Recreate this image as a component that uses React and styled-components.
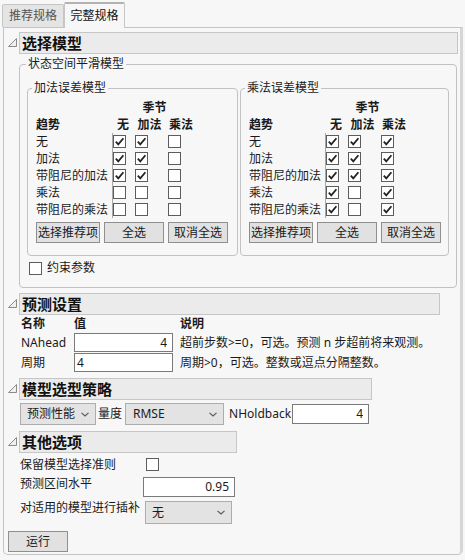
import React from 'react'
import styled, { createGlobalStyle } from 'styled-components'

const GlobalStyle = createGlobalStyle`
  body {
    margin: 0;
    background: #f7f7f7;
    font-family: "Noto Sans", "Noto Sans CJK SC", sans-serif;
    font-size: 12px;
    line-height: 14px;
    color: #1a1a1a;
  }
`

const Page = styled.div`
  width: 465px;
  height: 560px;
  overflow: hidden;
`

const TabBar = styled.div`
  display: flex;
  align-items: flex-end;
  height: 27px;
  padding-left: 2px;
`

const Tab = styled.div`
  box-sizing: border-box;
  width: ${p => (p.$active ? 61 : 62)}px;
  height: ${p => (p.$active ? 26 : 23)}px;
  margin-bottom: ${p => (p.$active ? -1 : 0)}px;
  display: flex;
  align-items: center;
  justify-content: center;
  border: 1px solid #c6c6c6;
  border-bottom: none;
  border-top: ${p => (p.$active ? '2px solid #b2b2b2' : '1px solid #c6c6c6')};
  border-radius: 2px 2px 0 0;
  background: ${p => (p.$active ? '#f7f7f7' : '#e4e4e4')};
  color: ${p => (p.$active ? '#111' : '#555')};
  position: relative;
  z-index: ${p => (p.$active ? 1 : 0)};
`

const Panel = styled.div`
  box-sizing: border-box;
  margin-left: 3px;
  width: 460px;
  border: 1px solid #c4c4c4;
  border-right: 3px solid #d6d6d6;
  border-radius: 0 0 5px 5px;
  padding: 4px 0 2px 0;
`

const Section = styled.div`
  margin-top: ${p => p.$mt || 0}px;
`

const SectionHead = styled.div`
  display: flex;
  align-items: center;
`

const Toggle = styled.div`
  width: 15px;
  box-sizing: border-box;
  padding-left: 4px;
  display: flex;
  align-items: center;
  height: 22px;
  svg { margin-top: -2px; }
`

const HeadBox = styled.div`
  box-sizing: border-box;
  width: ${p => p.$w}px;
  height: 22px;
  background: #ebebeb;
  border: 1px solid #c6c6c6;
  padding-left: 2px;
  font-size: 15px;
  font-weight: bold;
  line-height: 20px;
  color: #111;
`

const SectionBody = styled.div`
  padding-left: ${p => 15 + (p.$pl || 0)}px;
`

const Group = styled.fieldset`
  box-sizing: border-box;
  width: ${p => p.$w}px;
  margin: ${p => p.$mt || 0}px 0 0 0;
  padding: ${p => p.$pad};
  border: 1px solid #c2c2c2;
  border-radius: 4px;
  min-width: 0;
`

const Legend = styled.legend`
  padding: 0 2px;
  margin-left: ${p => p.$lx}px;
  font-size: 12px;
  line-height: 14px;
`

const GroupRow = styled.div`
  display: flex;
  gap: 2px;
`

const Table = styled.div`
  display: grid;
  grid-template-columns: 76px 22px 31px 32px;
  grid-auto-rows: 17px;
  align-items: center;
`

const HeadCell = styled.div`
  font-weight: bold;
  text-align: ${p => p.$align || 'left'};
  grid-column: ${p => p.$span || 'auto'};
`

const Label = styled.div`
  white-space: nowrap;
`

const CheckCell = styled.div`
  height: 17px;
  display: flex;
  align-items: center;
  box-sizing: border-box;
  padding-left: ${p => p.$pad}px;
  border-left: ${p => (p.$line ? '1px solid #a8a8a8' : 'none')};
`

const Box = styled.span`
  box-sizing: border-box;
  width: 13px;
  height: 13px;
  display: inline-flex;
  align-items: center;
  justify-content: center;
  border: 1px solid #5c5c5c;
  background: #fff;
  flex-shrink: 0;
`

const ButtonRow = styled.div`
  display: flex;
  gap: 4px;
  margin-top: 4px;
`

const Button = styled.div`
  box-sizing: border-box;
  width: ${p => p.$w}px;
  height: 21px;
  display: flex;
  align-items: center;
  justify-content: center;
  background: #e1e1e1;
  border: 1px solid #8f8f8f;
  font-size: 12px;
  margin-left: ${p => p.$ml || 0}px;
  margin-top: ${p => p.$mt || 0}px;
`

const OptionRow = styled.div`
  display: flex;
  align-items: center;
  gap: 5px;
  margin: 5px 0 0 2px;
`

const ForecastGrid = styled.div`
  display: grid;
  grid-template-columns: 53px 99px auto;
  grid-template-rows: 17px 19px 19px;
  row-gap: 1px;
  align-items: center;
`

const Desc = styled.div`
  padding-left: 7px;
  white-space: nowrap;
`

const Field = styled.input`
  box-sizing: border-box;
  width: ${p => p.$w}px;
  height: ${p => p.$h || 19}px;
  margin: 0;
  border: 1px solid #7a7a7a;
  background: #fff;
  font-family: "Noto Sans", "Noto Sans CJK SC", sans-serif;
  font-size: 12px;
  color: #1a1a1a;
  text-align: ${p => p.$align || 'left'};
  padding: 0 ${p => (p.$align === 'right' ? 5 : 2)}px 1px 2px;
  outline: none;
`

const StrategyRow = styled.div`
  display: flex;
  align-items: center;
  margin: 3px 0 0 1px;
`

const Select = styled.div`
  box-sizing: border-box;
  width: ${p => p.$w}px;
  height: ${p => p.$h || 22}px;
  display: flex;
  align-items: center;
  justify-content: space-between;
  padding: 0 6px 0 ${p => p.$pl || 6}px;
  background: #e3e3e3;
  border: 1px solid #adadad;
  margin-left: ${p => p.$ml || 0}px;
  margin-right: ${p => p.$mr || 0}px;
`

const Plain = styled.span`
  margin-left: ${p => p.$ml || 0}px;
  white-space: nowrap;
`

const OtherGrid = styled.div`
  display: grid;
  grid-template-columns: 123px auto;
  grid-template-rows: 17px 20px 23px;
  row-gap: 4px;
  margin: 3px 0 0 1px;
`

const OtherLabel = styled.div`
  white-space: nowrap;
  align-self: ${p => (p.$center ? 'center' : 'start')};
  padding-top: ${p => p.$pt || 0}px;
`

const OtherControl = styled.div`
  display: flex;
  align-items: center;
  padding-left: ${p => p.$pad}px;
`

function Triangle() {
  return (
    <svg width="9" height="9" viewBox="0 0 9 9">
      <path d="M0.5 8.5 L8.5 0.5 L8.5 8.5 Z" fill="#f0f0f0" stroke="#8a8a8a" strokeWidth="1" />
    </svg>
  )
}

function Chevron() {
  return (
    <svg width="8" height="5" viewBox="0 0 8 5">
      <path d="M0.5 0.8 L4 4 L7.5 0.8" fill="none" stroke="#555" strokeWidth="1.1" />
    </svg>
  )
}

function Check({ on }) {
  return (
    <Box>
      {on ? (
        <svg width="11" height="11" viewBox="0 0 11 11">
          <path d="M1.8 5.6 L4.3 8.4 L9.4 2.2" fill="none" stroke="#222" strokeWidth="1.8" />
        </svg>
      ) : null}
    </Box>
  )
}

function Header({ w, children }) {
  return (
    <SectionHead>
      <Toggle><Triangle /></Toggle>
      <HeadBox $w={w}>{children}</HeadBox>
    </SectionHead>
  )
}

const trends = ['无', '加法', '带阻尼的加法', '乘法', '带阻尼的乘法']
const addChecks = [[1, 1, 0], [1, 1, 0], [1, 1, 0], [0, 0, 0], [0, 0, 0]]
const mulChecks = [[1, 1, 1], [1, 1, 1], [1, 1, 1], [1, 0, 1], [1, 0, 1]]
const cellPad = [0, 1, 3]

function ErrorModel({ title, checks, w }) {
  return (
    <Group $w={w} $pad="4px 0 12px 8px">
      <Legend $lx={-4}>{title}</Legend>
      <Table>
        <div />
        <HeadCell $span="2 / 5" $align="center">季节</HeadCell>
        <HeadCell>趋势</HeadCell>
        <HeadCell $align="center">无</HeadCell>
        <HeadCell $align="center">加法</HeadCell>
        <HeadCell $align="center">乘法</HeadCell>
        {trends.map((t, r) => (
          <React.Fragment key={t}>
            <Label>{t}</Label>
            {checks[r].map((c, i) => (
              <CheckCell key={i} $pad={cellPad[i]} $line={i === 0}>
                <Check on={c === 1} />
              </CheckCell>
            ))}
          </React.Fragment>
        ))}
      </Table>
      <ButtonRow>
        <Button $w={64}>选择推荐项</Button>
        <Button $w={60}>全选</Button>
        <Button $w={60}>取消全选</Button>
      </ButtonRow>
    </Group>
  )
}

export default function App() {
  return (
    <Page>
      <GlobalStyle />
      <TabBar>
        <Tab>推荐规格</Tab>
        <Tab $active>完整规格</Tab>
      </TabBar>
      <Panel>
        <Section>
          <Header w={439}>选择模型</Header>
          <SectionBody>
            <Group $w={438} $mt={3} $pad="10px 7px 12px 7px">
              <Legend $lx={-1}>状态空间平滑模型</Legend>
              <GroupRow>
                <ErrorModel title="加法误差模型" checks={addChecks} w={211} />
                <ErrorModel title="乘法误差模型" checks={mulChecks} w={209} />
              </GroupRow>
              <OptionRow>
                <Check on={false} />
                <span>约束参数</span>
              </OptionRow>
            </Group>
          </SectionBody>
        </Section>

        <Section $mt={5}>
          <Header w={421}>预测设置</Header>
          <SectionBody $pl={2}>
            <ForecastGrid>
              <HeadCell>名称</HeadCell>
              <HeadCell>值</HeadCell>
              <HeadCell style={{ paddingLeft: 7 }}>说明</HeadCell>
              <Label>NAhead</Label>
              <Field $w={99} $align="right" defaultValue="4" readOnly />
              <Desc>超前步数&gt;=0，可选。预测 n 步超前将来观测。</Desc>
              <Label>周期</Label>
              <Field $w={99} defaultValue="4" readOnly />
              <Desc>周期&gt;0，可选。整数或逗点分隔整数。</Desc>
            </ForecastGrid>
          </SectionBody>
        </Section>

        <Section $mt={6}>
          <Header w={353}>模型选型策略</Header>
          <SectionBody>
            <StrategyRow>
              <Select $w={76}>
                <span>预测性能</span>
                <Chevron />
              </Select>
              <Plain $ml={2}>量度</Plain>
              <Select $w={99} $ml={3} $pl={7}>
                <span>RMSE</span>
                <Chevron />
              </Select>
              <Plain $ml={5}>NHoldback</Plain>
              <Field $w={77} $h={20} $align="right" defaultValue="4" readOnly style={{ marginLeft: 1 }} />
            </StrategyRow>
          </SectionBody>
        </Section>

        <Section $mt={6}>
          <Header w={218}>其他选项</Header>
          <SectionBody>
            <OtherGrid>
              <OtherLabel $center>保留模型选择准则</OtherLabel>
              <OtherControl $pad={3}><Check on={false} /></OtherControl>
              <OtherLabel>预测区间水平</OtherLabel>
              <OtherControl $pad={0}>
                <Field $w={92} $h={20} $align="right" defaultValue="0.95" readOnly />
              </OtherControl>
              <OtherLabel>对适用的模型进行插补</OtherLabel>
              <OtherControl $pad={2}>
                <Select $w={87} $h={23}>
                  <span>无</span>
                  <Chevron />
                </Select>
              </OtherControl>
            </OtherGrid>
          </SectionBody>
        </Section>

        <Button $w={60} $ml={4} $mt={7}>运行</Button>
      </Panel>
    </Page>
  )
}
